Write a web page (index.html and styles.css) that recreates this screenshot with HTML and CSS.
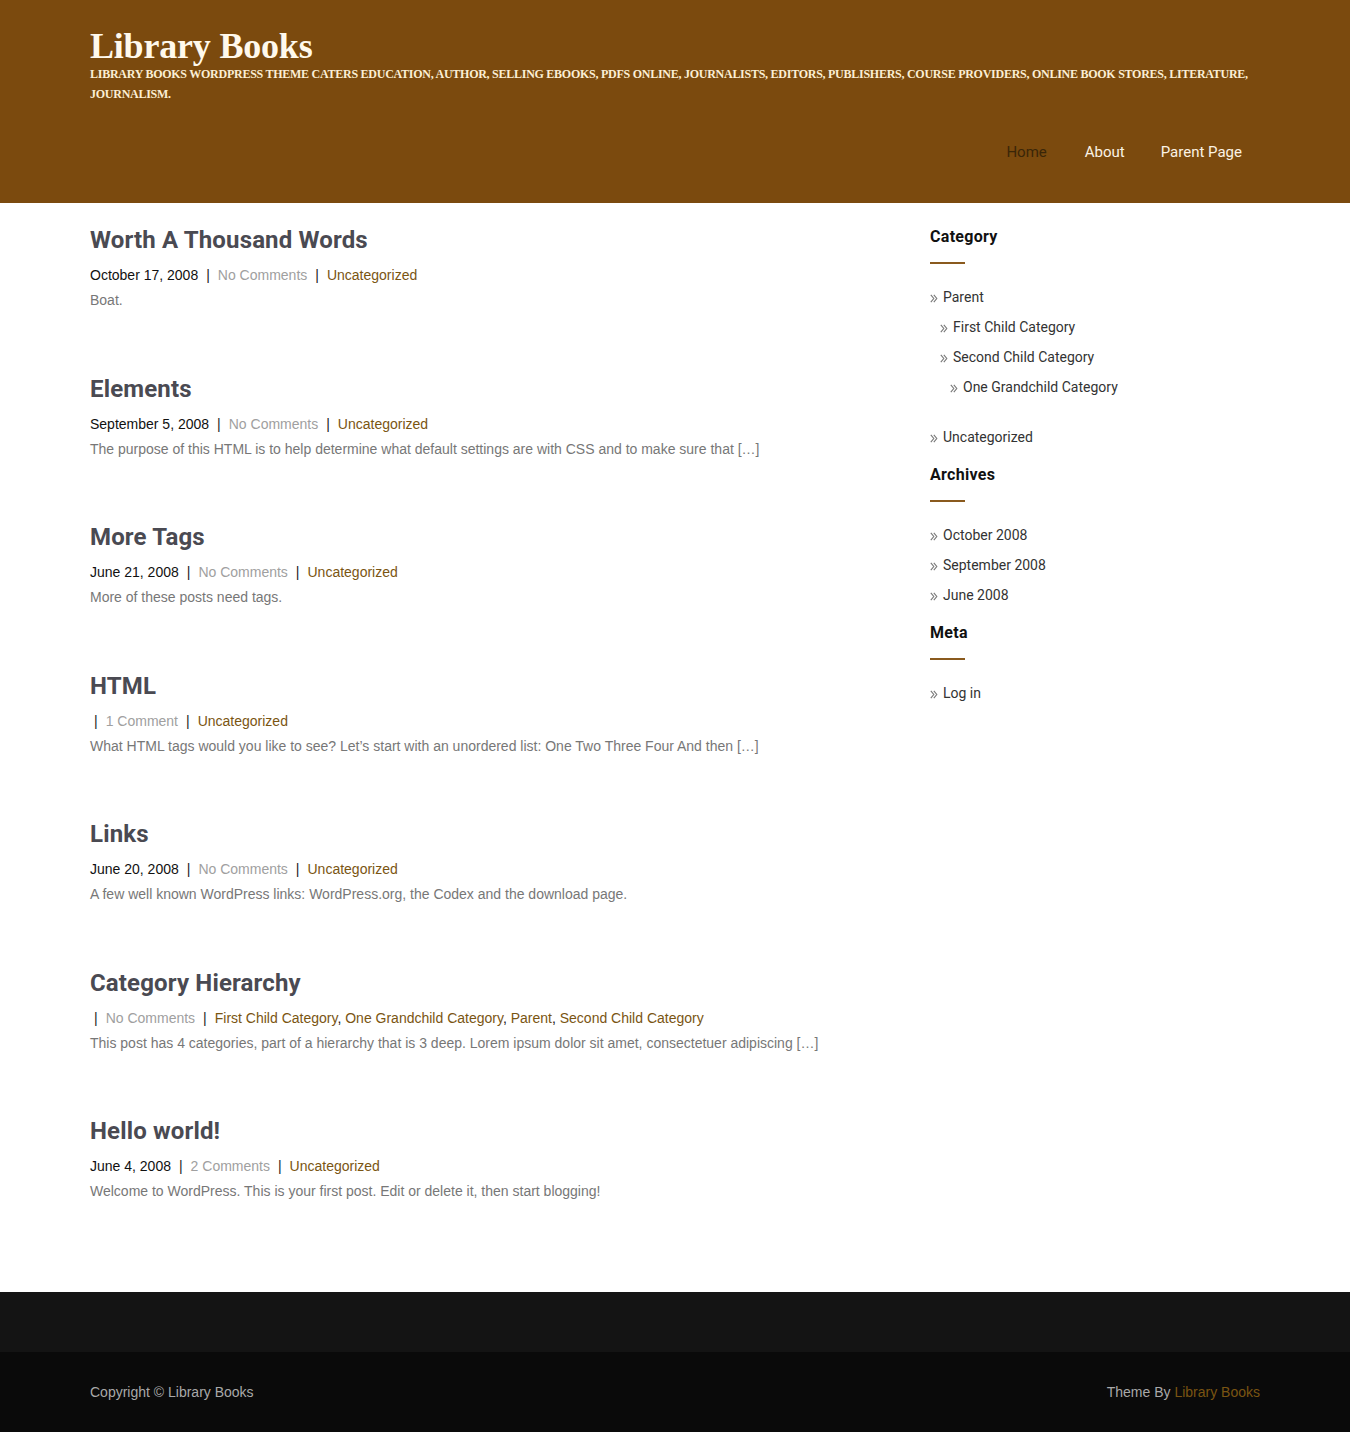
FILE: index.html
```html
<!DOCTYPE html>
<html lang="en">
<head>
<meta charset="utf-8">
<title>Library Books</title>
<link rel="stylesheet" href="styles.css">
</head>
<body>
<header class="site-header">
  <div class="container">
    <div class="branding">
      <h1 class="site-title">Library Books</h1>
      <p class="tagline">Library Books WordPress Theme caters education, author, selling ebooks, PDFs online, journalists, editors, publishers, course providers, online book stores, literature, journalism.</p>
    </div>
    <nav class="main-nav">
      <a class="current" href="#">Home</a>
      <a href="#">About</a>
      <a href="#">Parent Page</a>
    </nav>
  </div>
</header>

<div class="container content">
  <main class="posts">
    <article class="post">
      <h2 class="post-title">Worth A Thousand Words</h2>
      <div class="meta"><span class="date">October 17, 2008</span><span class="sep">|</span><span class="comments">No Comments</span><span class="sep">|</span><a class="cat" href="#">Uncategorized</a></div>
      <p class="excerpt">Boat.</p>
    </article>
    <article class="post">
      <h2 class="post-title">Elements</h2>
      <div class="meta"><span class="date">September 5, 2008</span><span class="sep">|</span><span class="comments">No Comments</span><span class="sep">|</span><a class="cat" href="#">Uncategorized</a></div>
      <p class="excerpt">The purpose of this HTML is to help determine what default settings are with CSS and to make sure that […]</p>
    </article>
    <article class="post">
      <h2 class="post-title">More Tags</h2>
      <div class="meta"><span class="date">June 21, 2008</span><span class="sep">|</span><span class="comments">No Comments</span><span class="sep">|</span><a class="cat" href="#">Uncategorized</a></div>
      <p class="excerpt">More of these posts need tags.</p>
    </article>
    <article class="post">
      <h2 class="post-title">HTML</h2>
      <div class="meta"><span class="sep">|</span><span class="comments">1 Comment</span><span class="sep">|</span><a class="cat" href="#">Uncategorized</a></div>
      <p class="excerpt">What HTML tags would you like to see? Let’s start with an unordered list: One Two Three Four And then […]</p>
    </article>
    <article class="post">
      <h2 class="post-title">Links</h2>
      <div class="meta"><span class="date">June 20, 2008</span><span class="sep">|</span><span class="comments">No Comments</span><span class="sep">|</span><a class="cat" href="#">Uncategorized</a></div>
      <p class="excerpt">A few well known WordPress links: WordPress.org, the Codex and the download page.</p>
    </article>
    <article class="post">
      <h2 class="post-title">Category Hierarchy</h2>
      <div class="meta"><span class="sep">|</span><span class="comments">No Comments</span><span class="sep">|</span><a class="cat" href="#">First Child Category</a>, <a class="cat" href="#">One Grandchild Category</a>, <a class="cat" href="#">Parent</a>, <a class="cat" href="#">Second Child Category</a></div>
      <p class="excerpt">This post has 4 categories, part of a hierarchy that is 3 deep. Lorem ipsum dolor sit amet, consectetuer adipiscing […]</p>
    </article>
    <article class="post">
      <h2 class="post-title">Hello world!</h2>
      <div class="meta"><span class="date">June 4, 2008</span><span class="sep">|</span><span class="comments">2 Comments</span><span class="sep">|</span><a class="cat" href="#">Uncategorized</a></div>
      <p class="excerpt">Welcome to WordPress. This is your first post. Edit or delete it, then start blogging!</p>
    </article>
  </main>

  <aside class="sidebar">
    <section class="widget">
      <h3 class="widget-title">Category</h3>
      <ul class="wlist">
        <li><a href="#">Parent</a>
          <ul class="wlist sub">
            <li><a href="#">First Child Category</a></li>
            <li><a href="#">Second Child Category</a>
              <ul class="wlist sub">
                <li><a href="#">One Grandchild Category</a></li>
              </ul>
            </li>
          </ul>
        </li>
        <li><a href="#">Uncategorized</a></li>
      </ul>
    </section>
    <section class="widget">
      <h3 class="widget-title">Archives</h3>
      <ul class="wlist">
        <li><a href="#">October 2008</a></li>
        <li><a href="#">September 2008</a></li>
        <li><a href="#">June 2008</a></li>
      </ul>
    </section>
    <section class="widget">
      <h3 class="widget-title">Meta</h3>
      <ul class="wlist">
        <li><a href="#">Log in</a></li>
      </ul>
    </section>
  </aside>
</div>

<footer class="site-footer">
  <div class="footer-widgets"></div>
  <div class="footer-bottom">
    <div class="container footer-row">
      <span>Copyright © Library Books</span>
      <span>Theme By <a href="#">Library Books</a></span>
    </div>
  </div>
</footer>
</body>
</html>
```

FILE: styles.css
```css
* { box-sizing: border-box; }
html, body { margin: 0; padding: 0; }
body {
  font-family: "Liberation Sans", Arial, sans-serif;
  font-size: 14px;
  color: #777;
  background: #fff;
}
a { text-decoration: none; }
.container {
  width: 1170px;
  margin: 0 auto;
}

/* Header */
.site-header {
  background: #7b4a0e;
  padding-top: 28px;
  height: 203px;
}
.site-title {
  margin: 0;
  font-family: "Liberation Serif", "Times New Roman", serif;
  font-weight: 700;
  font-size: 36px;
  line-height: 36px;
  color: #fff9ec;
  letter-spacing: -0.2px;
}
.tagline {
  margin: 0;
  font-family: "Liberation Serif", "Times New Roman", serif;
  font-weight: 700;
  font-size: 12px;
  line-height: 20px;
  text-transform: uppercase;
  color: #fbefd5;
  letter-spacing: -0.26px;
}
.main-nav {
  display: flex;
  justify-content: flex-end;
  margin-top: 28px;
}
.main-nav a {
  font-family: Roboto, "Liberation Sans", sans-serif;
  font-size: 15px;
  line-height: 40px;
  padding: 0 18px;
  color: #fbf3e4;
}
.main-nav a.current {
  color: #3a2608;
  padding-right: 20px;
  margin-left: -3px;
}

/* Content */
.content {
  display: grid;
  grid-template-columns: 800px 330px;
  column-gap: 40px;
  padding-top: 22px;
  padding-bottom: 27px;
}
.sidebar { padding-top: 1px; }
.post { margin-bottom: 63.5px; }
.post-title {
  margin: 0;
  font-family: Roboto, "Liberation Sans", sans-serif;
  font-weight: 700;
  font-size: 24px;
  line-height: 30px;
  color: #4a4a52;
  letter-spacing: 0.15px;
}
.meta {
  margin-top: 10px;
  line-height: 20px;
  font-size: 14px;
  color: #111;
}
.meta .sep { margin: 0 8px; color: #222; }
.meta .sep:first-child { margin-left: 4px; }
.meta .comments { color: #a0a0a0; }
.meta .cat { color: #7a5512; }
.excerpt {
  margin: 5px 0 0;
  line-height: 20px;
  color: #777;
}

/* Sidebar */
.widget { margin-bottom: 12px; }
.widget-title {
  margin: 0;
  font-family: Roboto, "Liberation Sans", sans-serif;
  font-weight: 700;
  font-size: 16px;
  line-height: 22px;
  color: #111;
  letter-spacing: 0.3px;
}
.widget-title::after {
  content: "";
  display: block;
  width: 35px;
  height: 2px;
  margin-top: 14px;
  background: #8a5a1e;
}
.wlist {
  list-style: none;
  margin: 18px 0 0;
  padding: 0;
}
.wlist.sub {
  margin: 0;
  padding: 0 0 10px 10px;
}
.wlist li {
  font-family: Roboto, "Liberation Sans", sans-serif;
  font-size: 14px;
  line-height: 30px;
}
.wlist li::before {
  content: "";
  display: inline-block;
  width: 8px;
  height: 9px;
  margin-right: 5px;
  vertical-align: -1px;
  background: url("data:image/svg+xml;utf8,<svg xmlns='http://www.w3.org/2000/svg' width='8' height='9' viewBox='0 0 8 9'><path d='M0.8 0.8 L3.8 4.5 L0.8 8.2 M3.8 0.8 L6.8 4.5 L3.8 8.2' fill='none' stroke='%23777' stroke-width='1.1'/></svg>") no-repeat;
}
.wlist a { color: #333; }

/* Footer */
.footer-widgets {
  background: #141414;
  height: 60px;
}
.footer-bottom {
  background: #0a0a0a;
  height: 80px;
}
.footer-row {
  display: flex;
  justify-content: space-between;
  align-items: center;
  height: 80px;
  color: #a9a9a9;
  font-size: 14px;
}
.footer-row a { color: #7a5512; }
```
